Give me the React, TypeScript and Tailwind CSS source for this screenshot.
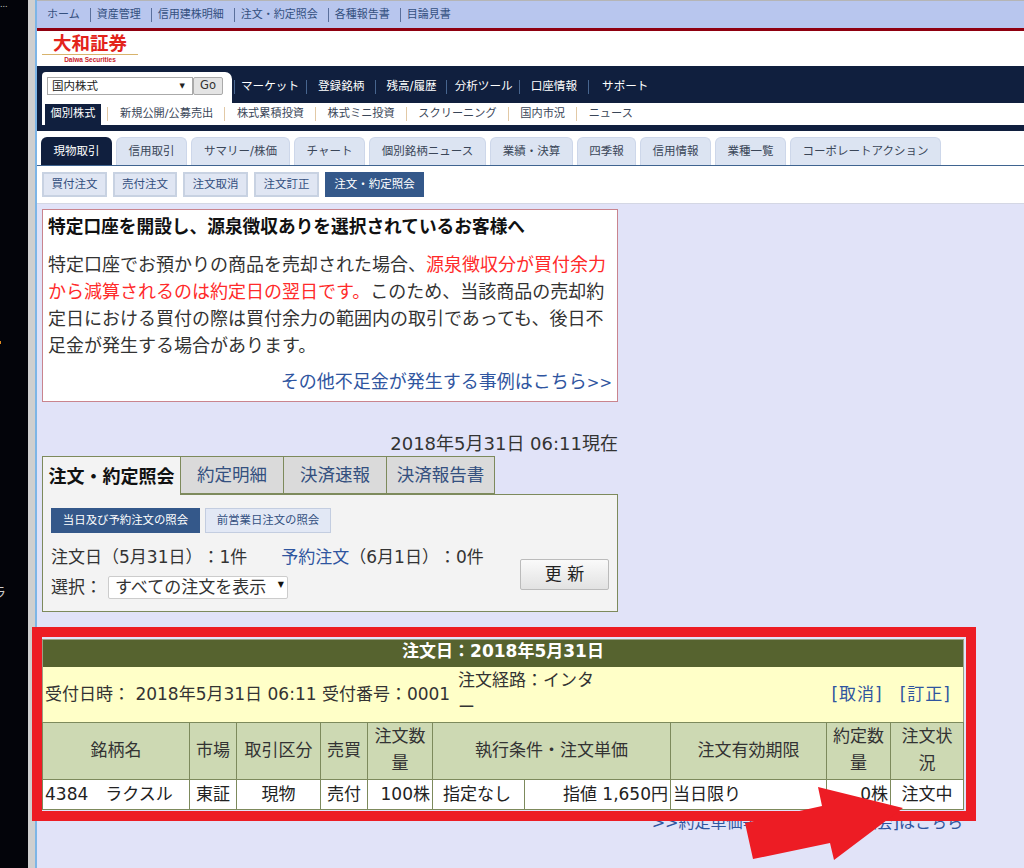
const topLinks = ["ホーム", "資産管理", "信用建株明細", "注文・約定照会", "各種報告書", "目論見書"];
const navLinks = [
  { label: "マーケット", className: "ml-[6px] mr-[7px]" },
  { label: "登録銘柄", className: "ml-[11px] mr-[11px]" },
  { label: "残高/履歴", className: "ml-[10px] mr-[9px]" },
  { label: "分析ツール", className: "ml-[8px] mr-[6px]" },
  { label: "口座情報", className: "ml-[11px] mr-[11px]" },
  { label: "サポート", className: "ml-[13px]" },
];
const subLinks = ["新規公開/公募売出", "株式累積投資", "株式ミニ投資", "スクリーニング", "国内市況", "ニュース"];
const mainTabs = [
  { label: "信用取引", className: "w-[71px]" },
  { label: "サマリー/株価", className: "w-[99px]" },
  { label: "チャート", className: "w-[71px]" },
  { label: "個別銘柄ニュース", className: "w-[117px]" },
  { label: "業績・決算", className: "w-[83px]" },
  { label: "四季報", className: "w-[59px]" },
  { label: "信用情報", className: "w-[71px]" },
  { label: "業種一覧", className: "w-[71px]" },
  { label: "コーポレートアクション", className: "w-[151px]" },
];
const subTabs = [
  { label: "買付注文", className: "w-[65px]" },
  { label: "売付注文", className: "w-[64px]" },
  { label: "注文取消", className: "w-[65px]" },
  { label: "注文訂正", className: "w-[65px]" },
];
const panelTabs = [
  { label: "約定明細", className: "w-[104px]" },
  { label: "決済速報", className: "w-[104px]" },
  { label: "決済報告書", className: "w-[109px]" },
];
const headCells = ["銘柄名", "市場", "取引区分", "売買", "注文数量"];

const th = "h-[56px] border border-[#7d8a5c] bg-[#cdd9b3] px-[5px] pb-[2px] font-normal leading-[27px] text-[#333]";
const td = "h-[30px] border border-[#7d8a5c] bg-white px-[2px] pb-[1px] leading-[24px] text-[#222]";

function Bar({ className }: { className: string }) {
  return <span className={"inline-block h-[14px] w-px " + className} />;
}

export default function App() {
  return (
    <div className="relative flex h-[868px] w-[1024px] overflow-hidden bg-black [font-family:'DejaVu_Sans','Noto_Sans_CJK_JP',sans-serif] [text-spacing-trim:space-all]">
      <div className="relative w-[28px] shrink-0 bg-[#03040a]">
        <span className="absolute left-0 top-[3px] text-[8px] leading-[4px] text-[#ccc]">...</span>
        <span className="absolute left-0 top-[341px] h-[3px] w-px bg-[#e08a20]" />
        <span className="absolute -left-[7px] top-[585px] text-[13px] leading-[16px] text-[#ccc]">ラ</span>
      </div>
      <div className="w-[7px] shrink-0 bg-[#cfcfcf]" />
      <div className="w-[2px] shrink-0 bg-[#7db5e6]" />

      <main className="flex w-[987px] shrink-0 flex-col bg-[#e1e3f8]">
        <div className="flex h-[28px] items-center gap-[7px] border-t border-[#b5b5b5] bg-[#b8c6ee] pl-[10px] pt-[1px] text-[11px] text-[#34507f]">
          {topLinks.map((link, i) => (
            <div className="flex items-center gap-[6px]" key={link}>
              {i > 0 && <Bar className="bg-[#5a6f9c]" />}
              <span className="mr-[3px]">{link}</span>
            </div>
          ))}
        </div>
        <div className="h-[3px] bg-[#8f0010]" />

        <div className="flex h-[35px] flex-col bg-white pl-[5px] pt-[2px]">
          <div className="w-[96px] border-b border-[#d8b36c] text-center text-[18.5px] font-bold leading-[21px] text-[#e3231b]">大和証券</div>
          <div className="w-[96px] text-center text-[6.5px] font-bold leading-[9px] text-[#c8202a] [font-family:'Liberation_Sans',sans-serif]">Daiwa Securities</div>
        </div>

        <div className="bg-[#101f3e] pb-[6px] pt-[6px]">
          <div className="flex h-[31px] items-stretch pl-[5px]">
            <div className="flex w-[190px] items-start rounded-tr-[7px] rounded-tl-[4px] bg-white pl-[5px] pt-[5px]">
              <div className="flex h-[18px] w-[146px] items-center justify-between border border-[#aaa] bg-white pl-[4px] pr-[7px] pt-[1px] text-[11.5px] text-[#222]">
                <span>国内株式</span>
                <span className="text-[7px]">▼</span>
              </div>
              <div className="flex h-[18px] w-[30px] items-center justify-center rounded-[2px] border border-[#aaa] bg-[#e4e4e4] text-[11.5px] text-[#333]">Go</div>
            </div>
            <div className="flex h-[28px] items-center pl-[2px] pt-[2px] text-[11.6px] text-white">
              {navLinks.map((link) => (
                <div className="flex items-center" key={link.label}>
                  <Bar className="bg-[#47658f]" />
                  <span className={link.className}>{link.label}</span>
                </div>
              ))}
            </div>
          </div>
          <div className="ml-[5px] flex h-[22px] items-center bg-white pl-[3px] text-[11.2px] text-[#3a4658]">
            <div className="flex h-[21px] w-[56px] items-center justify-center bg-[#101f3e] text-white">個別株式</div>
            {subLinks.map((link, i) => (
              <div className={i === 0 ? "ml-[6px] flex items-center gap-[12px] pt-[1px]" : "ml-[11px] flex items-center gap-[11.6px] pt-[1px]"} key={link}>
                <Bar className="bg-[#e2c9a6]" />
                <span>{link}</span>
              </div>
            ))}
          </div>
        </div>

        <div className="flex h-[35px] items-end gap-[4px] border-b border-[#3f6490] bg-white pl-[4px]">
          <div className="flex h-[28px] w-[71px] items-center justify-center rounded-t-[6px] bg-[#101f3e] pt-[1px] text-[11.5px] text-white">現物取引</div>
          {mainTabs.map((tab) => (
            <div className={"flex h-[28px] items-center justify-center rounded-t-[6px] border border-b-0 border-[#cdd7ea] bg-[#dce4f2] pt-[1px] text-[11.5px] text-[#3a4658] " + tab.className} key={tab.label}>
              {tab.label}
            </div>
          ))}
        </div>

        <div className="flex h-[38px] items-start gap-[6px] border-b border-[#d4d7e4] bg-white pl-[5px] pt-[6px] text-[11.5px]">
          {subTabs.map((tab) => (
            <div className={"flex h-[25px] items-center justify-center border-2 border-[#c8d2e2] bg-[#e0e6f3] text-[#34507f] " + tab.className} key={tab.label}>
              {tab.label}
            </div>
          ))}
          <div className="flex h-[25px] w-[99px] items-center justify-center bg-[#34588a] text-white">注文・約定照会</div>
        </div>

        <section className="ml-[5px] mt-[5px] h-[193px] w-[576px] border border-[#c9848e] bg-white px-[5px] pt-[4px]">
          <h2 className="text-[17.7px] font-bold leading-[26px] text-[#111]">特定口座を開設し、源泉徴収ありを選択されているお客様へ</h2>
          <p className="mt-[11px] w-[564px] text-[18px] leading-[27px] text-[#333]">
            特定口座でお預かりの商品を売却された場合、<span className="text-[#ff2a2a]">源泉徴収分が買付余力から減算されるのは約定日の翌日です。</span>このため、当該商品の売却約定日における買付の際は買付余力の範囲内の取引であっても、後日不足金が発生する場合があります。
          </p>
          <div className="mt-[9px] text-right text-[18px] leading-[27px] text-[#2f559f]">その他不足金が発生する事例はこちら<span className="text-[15px]">&gt;&gt;</span></div>
        </section>

        <div className="ml-[5px] mt-[29px] w-[576px] text-right text-[18px] leading-[26px] text-[#333]">2018年5月31日 06:11現在</div>

        <div className="ml-[5px] -mt-px flex h-[38px] w-[576px] items-stretch">
          <div className="relative z-10 flex h-[39px] w-[139px] items-center justify-center border border-b-0 border-[#7d8a5c] bg-[#f3f3f3] text-[18px] font-bold text-[#111]">注文・約定照会</div>
          {panelTabs.map((tab) => (
            <div className={"-ml-px flex items-center justify-center border border-[#7d8a5c] bg-[#dadada] text-[17.5px] text-[#34507f] " + tab.className} key={tab.label}>
              {tab.label}
            </div>
          ))}
        </div>

        <div className="ml-[5px] flex h-[118px] w-[576px] items-start justify-between border border-[#7d8a5c] bg-[#f3f3f3] pl-[8px] pr-[8px] pt-[13px]">
          <div>
            <div className="flex gap-[5px] text-[11.4px]">
              <div className="flex h-[25px] w-[149px] items-center justify-center bg-[#34588a] text-white">当日及び予約注文の照会</div>
              <div className="flex h-[25px] w-[126px] items-center justify-center border border-[#c3cde0] bg-[#e2e8f5] text-[#34507f]">前営業日注文の照会</div>
            </div>
            <div className="mt-[11px] flex text-[17px] leading-[26px] text-[#333]">
              <span>注文日（5月31日）：1件</span>
              <span className="ml-[34px]"><span className="text-[#2f559f]">予約注文</span>（6月1日）：0件</span>
            </div>
            <div className="mt-[5px] flex items-center text-[17px] text-[#333]">
              <span className="w-[57px] leading-[24px]">選択：</span>
              <div className="flex h-[23px] w-[180px] items-center justify-between rounded-[2px] border border-[#ccc] bg-white pl-[6px] pr-[3px] leading-[22px]">
                <span>すべての注文を表示</span>
                <span className="mb-[5px] text-[8px] text-[#111]">▼</span>
              </div>
            </div>
          </div>
          <div className="mt-[51px] flex h-[31px] w-[89px] items-center justify-center rounded-[2px] border border-[#bbb] bg-gradient-to-b from-[#fafafa] to-[#e2e2e2] text-[17px] text-[#222]">更 新</div>
        </div>

        <div className="relative ml-[5px] mt-[27px] w-[922px]">
          <table className="w-[922px] table-fixed border-collapse border border-[#9aa286] text-[17px]">
            <colgroup>
              <col className="w-[147px]" />
              <col className="w-[47px]" />
              <col className="w-[84px]" />
              <col className="w-[47px]" />
              <col className="w-[65px]" />
              <col className="w-[92px]" />
              <col className="w-[146px]" />
              <col className="w-[156px]" />
              <col className="w-[64px]" />
              <col className="w-[73px]" />
            </colgroup>
            <tbody>
              <tr>
                <td colSpan={10} className="h-[27px] bg-[#56632f] pb-[3px] text-center text-[17px] font-bold leading-[23px] text-white">注文日：2018年5月31日</td>
              </tr>
              <tr>
                <td colSpan={10} className="h-[56px] border-b border-[#7d8a5c] bg-[#ffffc8] px-[2px] text-[#333]">
                  <div className="flex items-center">
                    <span className="w-[413px] shrink-0 whitespace-nowrap">受付日時： 2018年5月31日 06:11 受付番号：0001</span>
                    <span className="w-[150px] shrink-0 leading-[27px]">注文経路：インタ<br />ー</span>
                    <span className="ml-auto mr-[10px] flex gap-[17px] tracking-[1px] text-[#2f559f]">
                      <span>[取消]</span>
                      <span>[訂正]</span>
                    </span>
                  </div>
                </td>
              </tr>
              <tr>
                {headCells.map((cell) => (
                  <th className={th} key={cell}>{cell}</th>
                ))}
                <th colSpan={2} className={th}>執行条件・注文単価</th>
                <th className={th}>注文有効期限</th>
                <th className={th}>約定数量</th>
                <th className={th}>注文状況</th>
              </tr>
              <tr>
                <td className={td}><span className="whitespace-pre">4384　ラクスル</span></td>
                <td className={td + " text-center"}>東証</td>
                <td className={td + " text-center"}>現物</td>
                <td className={td + " text-center"}>売付</td>
                <td className={td + " text-right"}>100株</td>
                <td className={td + " pl-[10px]"}>指定なし</td>
                <td className={td + " text-right"}>指値 1,650円</td>
                <td className={td}>当日限り</td>
                <td className={td + " text-right"}>0株</td>
                <td className={td + " text-center"}>注文中</td>
              </tr>
            </tbody>
          </table>
          <div className="mt-[3px] pr-[1px] text-right text-[16px] leading-[20px] text-[#2f559f]">&gt;&gt;約定単価等の明細書[約定照会]はこちら</div>
          <div className="pointer-events-none absolute -left-[10px] -top-[12px] h-[194px] w-[944px] border-[10px] border-[#ed1c24]" />
        </div>
      </main>

      <svg className="absolute left-[740px] top-[780px] h-[85px] w-[170px]" viewBox="740 780 170 85">
        <polygon points="903,808 818,787 822,806 745,823 753,859 830,843 834,860" fill="#ed1c24" />
      </svg>
    </div>
  );
}
